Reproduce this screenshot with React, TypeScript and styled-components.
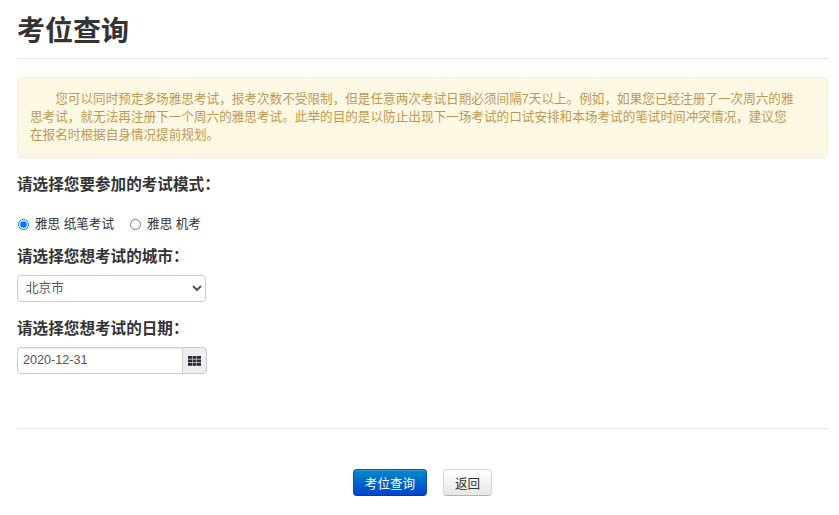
import React from "react";
import styled, { createGlobalStyle } from "styled-components";

const GlobalStyle = createGlobalStyle`
  html, body { margin: 0; padding: 0; background: #fff; }
  body {
    font-family: "Liberation Sans", "Noto Sans CJK SC", sans-serif;
    color: #333;
  }
`;

const Page = styled.div`
  width: 811px;
  margin-left: 17px;
`;

const Title = styled.h1`
  margin: 0;
  height: 58px;
  border-bottom: 1px solid #e5e5e5;
  font-size: 28px;
  line-height: 64px;
  font-weight: 700;
  color: #333;
`;

const Alert = styled.div`
  box-sizing: border-box;
  height: 81px;
  margin-top: 18px;
  padding: 12px 30px 0 12px;
  background: #fcf8e3;
  border: 1px solid #fbeed5;
  border-radius: 4px;
  color: #c09853;
  font-size: 12.61px;
  line-height: 18px;
  text-indent: 2em;
`;

const Heading = styled.h4<{ $top: number; $bottom: number }>`
  margin: ${(p) => p.$top}px 0 ${(p) => p.$bottom}px;
  font-size: 15.6px;
  line-height: 20px;
  font-weight: 700;
  color: #333;
`;

const RadioRow = styled.div`
  display: flex;
  align-items: center;
  height: 20px;
  gap: 15px;
`;

const RadioLabel = styled.label`
  display: flex;
  align-items: center;
  font-size: 12.6px;
  line-height: 20px;
  color: #333;
`;

const Radio = styled.input`
  width: 11px;
  height: 11px;
  margin: 0 6px 0 1px;
`;

const CitySelect = styled.select`
  display: block;
  width: 189px;
  height: 27px;
  padding: 0 0 2px 4px;
  background-color: #fff;
  border: 1px solid #ccc;
  border-radius: 4px;
  color: #555;
  font-family: inherit;
  font-size: 12.6px;
`;

const DateGroup = styled.div`
  display: flex;
  width: 190px;
  height: 27px;
`;

const DateInput = styled.input`
  box-sizing: border-box;
  width: 165px;
  height: 27px;
  padding: 0 5px 2px;
  background: #fff;
  border: 1px solid #ccc;
  border-right: 0;
  border-radius: 4px 0 0 4px;
  box-shadow: inset 0 1px 1px rgba(0, 0, 0, 0.075);
  color: #555;
  font-family: inherit;
  font-size: 12.6px;
`;

const CalendarButton = styled.span`
  box-sizing: border-box;
  display: flex;
  align-items: center;
  justify-content: center;
  width: 25px;
  height: 27px;
  background: #eee;
  border: 1px solid #ccc;
  border-radius: 0 4px 4px 0;
`;

const Divider = styled.hr`
  margin: 54px 0 0;
  border: 0;
  border-top: 1px solid #e5e5e5;
`;

const Actions = styled.div`
  display: flex;
  justify-content: center;
  gap: 16px;
  margin-top: 40px;
`;

const Button = styled.button<{ $primary?: boolean }>`
  box-sizing: border-box;
  height: 27px;
  padding: 0;
  width: ${(p) => (p.$primary ? "74px" : "49px")};
  border: 1px solid ${(p) => (p.$primary ? "#0055b3" : "#d5d5d5")};
  border-bottom-color: ${(p) => (p.$primary ? "#003f88" : "#b3b3b3")};
  border-radius: 4px;
  background: ${(p) =>
    p.$primary ? "linear-gradient(#0088cc, #0044cc)" : "linear-gradient(#ffffff, #e6e6e6)"};
  box-shadow: inset 0 1px 0 rgba(255, 255, 255, 0.2), 0 1px 2px rgba(0, 0, 0, 0.05);
  color: ${(p) => (p.$primary ? "#fff" : "#333")};
  font-family: inherit;
  font-size: 12.6px;
`;

const GridIcon = () => (
  <svg width="13" height="10" viewBox="0 0 13 10" fill="#2b2b3a">
    {[0, 3.5, 7].map((y) =>
      [0, 4.5, 9].map((x) => <rect key={`${x}-${y}`} x={x} y={y} width="4" height="2.8" />)
    )}
  </svg>
);

export default function App() {
  return (
    <>
      <GlobalStyle />
      <Page>
        <Title>考位查询</Title>
        <Alert>
          您可以同时预定多场雅思考试，报考次数不受限制，但是任意两次考试日期必须间隔7天以上。例如，如果您已经注册了一次周六的雅思考试，就无法再注册下一个周六的雅思考试。此举的目的是以防止出现下一场考试的口试安排和本场考试的笔试时间冲突情况，建议您在报名时根据自身情况提前规划。
        </Alert>
        <Heading $top={17} $bottom={19}>请选择您要参加的考试模式：</Heading>
        <RadioRow>
          <RadioLabel>
            <Radio type="radio" name="mode" defaultChecked />
            雅思 纸笔考试
          </RadioLabel>
          <RadioLabel>
            <Radio type="radio" name="mode" />
            雅思 机考
          </RadioLabel>
        </RadioRow>
        <Heading $top={13} $bottom={8}>请选择您想考试的城市：</Heading>
        <CitySelect defaultValue="北京市">
          <option>北京市</option>
        </CitySelect>
        <Heading $top={17} $bottom={8}>请选择您想考试的日期：</Heading>
        <DateGroup>
          <DateInput defaultValue="2020-12-31" />
          <CalendarButton>
            <GridIcon />
          </CalendarButton>
        </DateGroup>
        <Divider />
        <Actions>
          <Button $primary>考位查询</Button>
          <Button>返回</Button>
        </Actions>
      </Page>
    </>
  );
}
